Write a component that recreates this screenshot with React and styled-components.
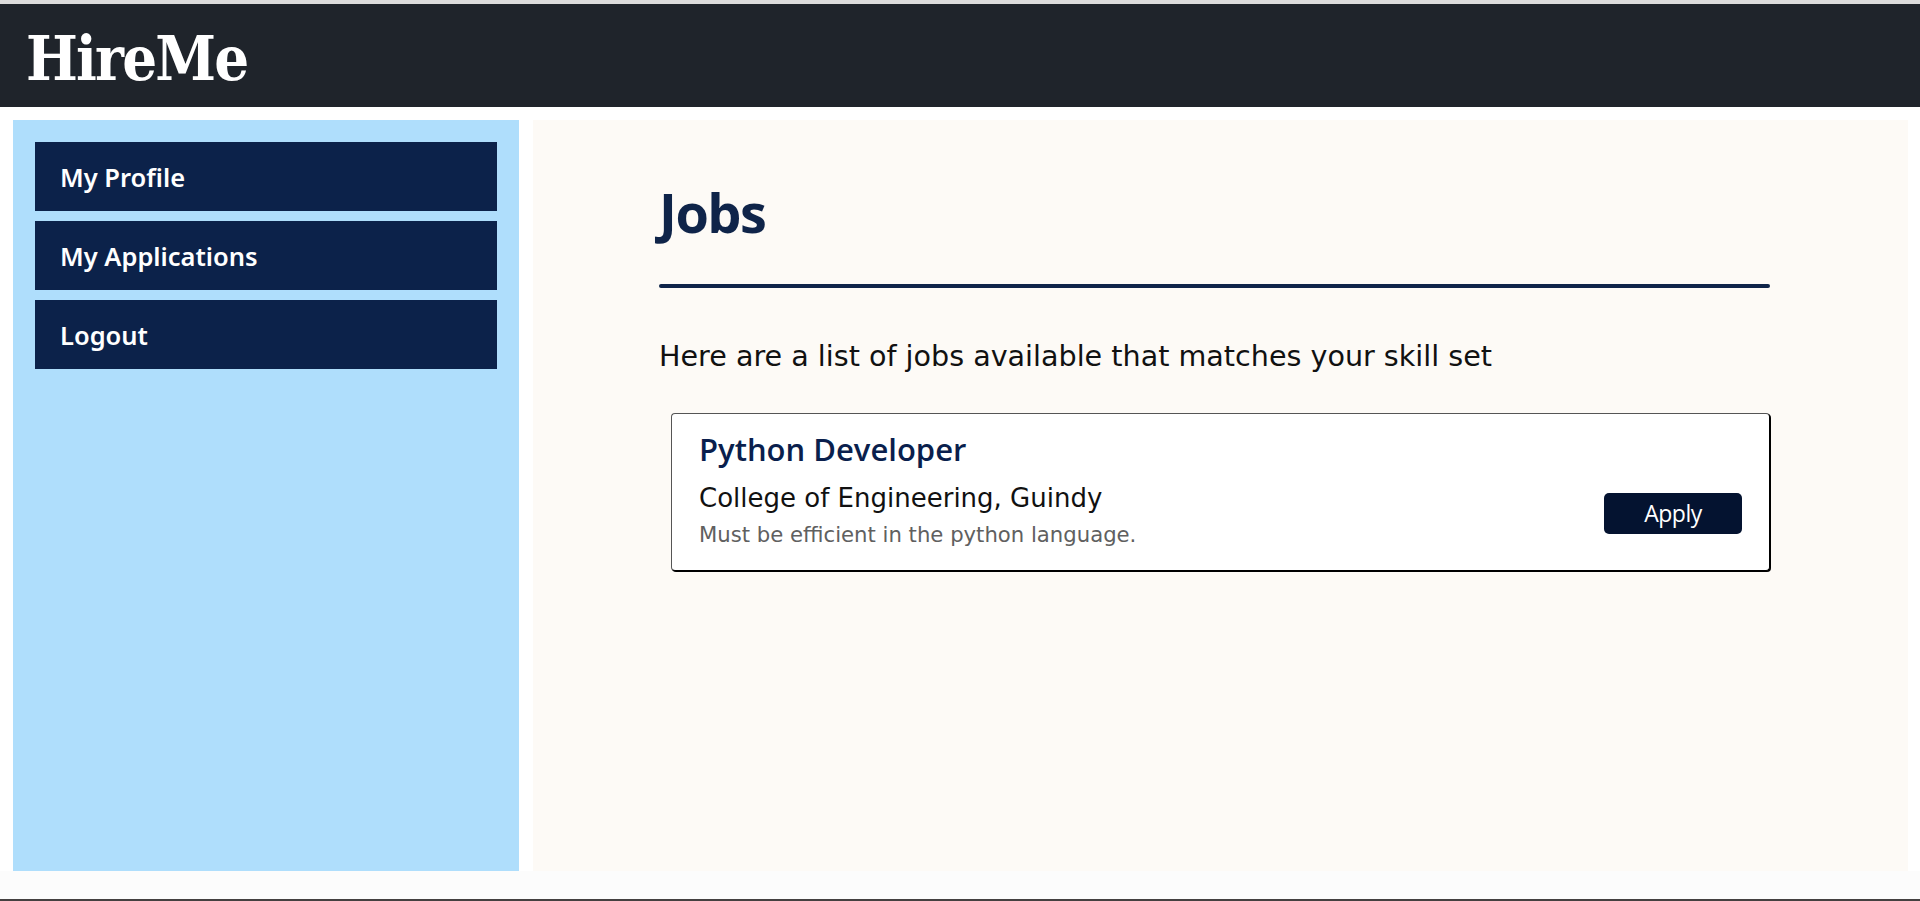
import styled, { createGlobalStyle } from "styled-components";

const GlobalStyle = createGlobalStyle`
  html, body {
    margin: 0;
    padding: 0;
    background: #ffffff;
  }
  * {
    box-sizing: border-box;
  }
`;

const Page = styled.div`
  height: 901px;
  display: flex;
  flex-direction: column;
  border-top: 4px solid #dcdcdc;
  border-bottom: 2px solid #444040;
  background: #fcfcfc;
  overflow: hidden;
`;

const Header = styled.header`
  height: 103px;
  background-color: #1f242b;
  display: flex;
  align-items: center;
  padding-left: 26px;
  flex-shrink: 0;
`;

const Logo = styled.h1`
  margin: 0;
  font-family: "DejaVu Serif Condensed", "DejaVu Serif", serif;
  font-weight: bold;
  font-size: 61px;
  color: #ffffff;
  letter-spacing: -1.8px;
  padding-top: 6px;
`;

const Body = styled.div`
  display: flex;
  gap: 14px;
  padding: 13px 12px 0 13px;
  height: 764px;
  background: #ffffff;
`;

const Sidebar = styled.nav`
  width: 506px;
  flex-shrink: 0;
  background-color: #afdefc;
  padding: 22px;
  display: flex;
  flex-direction: column;
  gap: 10px;
`;

const NavItem = styled.a`
  height: 69px;
  background-color: #0c224a;
  color: #ffffff;
  display: flex;
  align-items: center;
  padding-left: 25px;
  font-family: "Noto Sans", "Open Sans", sans-serif;
  font-weight: 600;
  font-size: 25.5px;
  text-decoration: none;
  cursor: pointer;
`;

const Main = styled.main`
  flex: 1;
  background-color: #fdfaf6;
  padding: 60px 138px 0 126px;
  font-family: "DejaVu Sans", "Open Sans", sans-serif;
`;

const Title = styled.h2`
  margin: 0;
  font-family: "Open Sans", sans-serif;
  font-size: 54px;
  font-weight: 700;
  letter-spacing: -1.5px;
  color: #0f2449;
  line-height: 1.2;
`;

const Divider = styled.hr`
  margin: 39px 0 0;
  border: none;
  height: 4px;
  border-radius: 2px;
  background-color: #0f2449;
`;

const Intro = styled.p`
  margin: 51px 0 0;
  font-size: 28.6px;
  color: #111111;
`;

const JobList = styled.div`
  margin: 40px 0 0 12px;
  display: flex;
  flex-direction: column;
  gap: 16px;
`;

const Card = styled.div`
  background: #ffffff;
  border: 1.5px solid #555555;
  border-right-color: #000;
  border-bottom-color: #000;
  box-shadow: 1px 1px 0 #000;
  border-radius: 4px;
  min-height: 158px;
  padding: 5px 27px 10px 27px;
  display: flex;
  align-items: center;
  justify-content: space-between;
`;

const Info = styled.div`
  display: flex;
  flex-direction: column;
`;

const JobTitle = styled.h3`
  margin: 0;
  font-family: "Open Sans", sans-serif;
  font-size: 31px;
  font-weight: 600;
  color: #0a1f4d;
  line-height: 1.4;
`;

const Company = styled.div`
  margin-top: 9px;
  font-size: 26px;
  color: #111111;
  line-height: 1.35;
`;

const Description = styled.div`
  margin-top: 3px;
  font-size: 21.2px;
  color: #606060;
  line-height: 1.5;
`;

const ApplyButton = styled.button`
  width: 138px;
  height: 41px;
  margin-top: 48px;
  border: none;
  border-radius: 5px;
  background-color: #041330;
  color: #ffffff;
  font-family: "Open Sans", sans-serif;
  font-size: 23px;
  letter-spacing: -0.5px;
  cursor: pointer;
`;

const jobs = [
  {
    id: 1,
    title: "Python Developer",
    company: "College of Engineering, Guindy",
    description: "Must be efficient in the python language.",
  },
];

const App = () => {
  return (
    <>
      <GlobalStyle />
      <Page>
        <Header>
          <Logo>HireMe</Logo>
        </Header>
        <Body>
          <Sidebar>
            <NavItem>My Profile</NavItem>
            <NavItem>My Applications</NavItem>
            <NavItem>Logout</NavItem>
          </Sidebar>
          <Main>
            <Title>Jobs</Title>
            <Divider />
            <Intro>Here are a list of jobs available that matches your skill set</Intro>
            <JobList>
              {jobs.map((job) => (
                <Card key={job.id}>
                  <Info>
                    <JobTitle>{job.title}</JobTitle>
                    <Company>{job.company}</Company>
                    <Description>{job.description}</Description>
                  </Info>
                  <ApplyButton>Apply</ApplyButton>
                </Card>
              ))}
            </JobList>
          </Main>
        </Body>
      </Page>
    </>
  );
};

export default App;
